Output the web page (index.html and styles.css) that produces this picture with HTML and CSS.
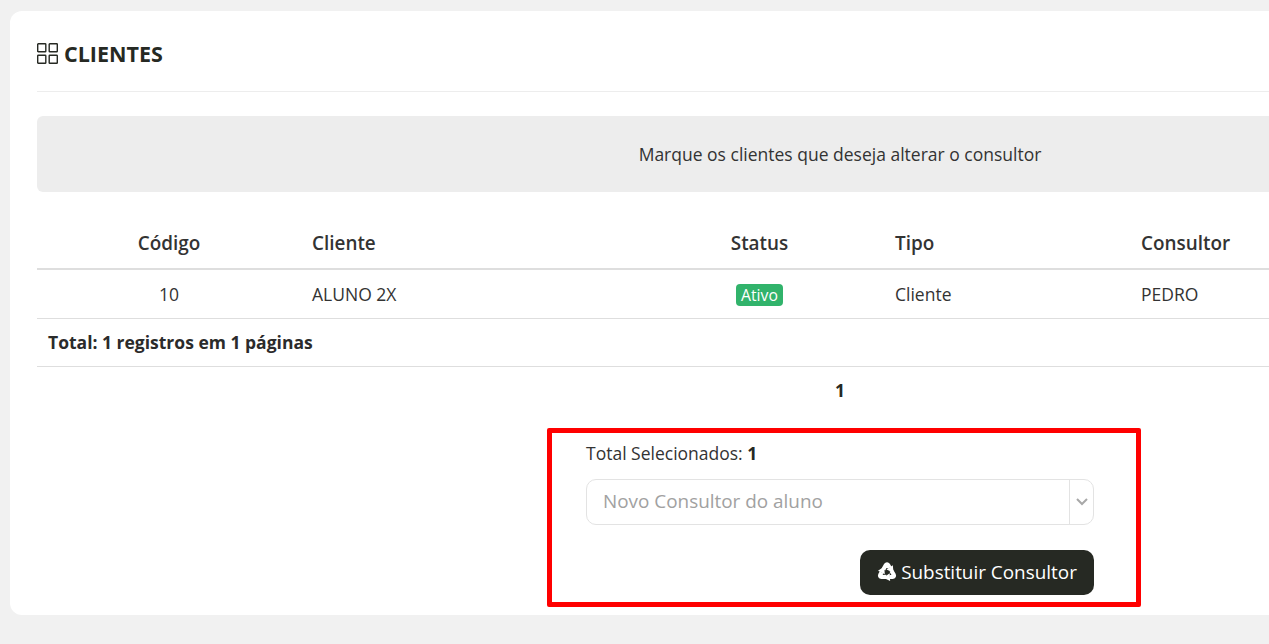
FILE: index.html
```html
<!DOCTYPE html>
<html lang="pt-BR">
<head>
<meta charset="utf-8">
<title>Clientes</title>
<link rel="stylesheet" href="styles.css">
</head>
<body>
<main class="card">
  <header class="card-head">
    <svg class="grid-icon" width="22" height="22" viewBox="0 0 22 22" fill="none" stroke="currentColor" stroke-width="1.4">
      <rect x="0.7" y="0.7" width="8.1" height="8.1" rx="0.6"/>
      <rect x="12.2" y="0.7" width="8.1" height="8.1" rx="0.6"/>
      <rect x="0.7" y="12.2" width="8.1" height="8.1" rx="0.6"/>
      <rect x="12.2" y="12.2" width="8.1" height="8.1" rx="0.6"/>
    </svg>
    <h1 class="title">CLIENTES</h1>
  </header>
  <div class="notice">Marque os clientes que deseja alterar o consultor</div>
  <table class="data">
    <colgroup>
      <col class="c-code"><col class="c-client"><col class="c-status"><col class="c-type"><col class="c-cons">
    </colgroup>
    <thead>
      <tr><th class="center">Código</th><th>Cliente</th><th class="center">Status</th><th>Tipo</th><th>Consultor</th></tr>
    </thead>
    <tbody>
      <tr><td class="center">10</td><td>ALUNO 2X</td><td class="center"><span class="badge">Ativo</span></td><td>Cliente</td><td>PEDRO</td></tr>
    </tbody>
  </table>
  <div class="total">Total: 1 registros em 1 páginas</div>
  <div class="pager">1</div>
  <section class="replace">
    <p class="selected">Total Selecionados: <b>1</b></p>
    <div class="select">
      <span class="placeholder">Novo Consultor do aluno</span>
      <span class="arrow">
        <svg width="12" height="8" viewBox="0 0 12 8" fill="none" stroke="#a8a8a8" stroke-width="2"><path d="M1 1l5 5 5-5"/></svg>
      </span>
    </div>
    <div class="actions">
      <button class="btn" type="button">
        <svg class="recycle" width="20" height="20" viewBox="0 0 24 24" fill="#fff">
          <g id="arm">
            <path d="M7.6 10.2L10.4 5.2Q12 3 13.6 5.2L15.2 8" fill="none" stroke="#fff" stroke-width="5"/>
            <path d="M11.4 10.2L19 5.2L19.8 14.2Z"/>
          </g>
          <use href="#arm" transform="rotate(120 12 13.6)"/>
          <use href="#arm" transform="rotate(240 12 13.6)"/>
        </svg>
        <span>Substituir Consultor</span>
      </button>
    </div>
    <div class="highlight"></div>
  </section>
</main>
</body>
</html>
```
FILE: styles.css
```css
* { box-sizing: border-box; }
html, body { margin: 0; height: 644px; overflow: hidden; }
body {
  background: #f1f1f1;
  padding: 11px 0 0 10px;
  font-family: "Open Sans", sans-serif;
  font-size: 17.5px;
  color: #333;
}
.card {
  width: 1660px;
  height: 604px;
  background: #fff;
  border-radius: 12px;
  padding: 0 27px;
}
.card-head {
  height: 81px;
  display: flex;
  align-items: center;
  gap: 5px;
  padding-top: 5px;
  border-bottom: 1px solid #ededed;
  color: #262923;
}
.grid-icon { flex: none; }
.title { margin: 0; font-size: 21.5px; font-weight: 700; color: #262923; }
.notice {
  margin-top: 24px;
  height: 76px;
  background: #ededed;
  border-radius: 6px;
  display: flex;
  align-items: center;
  justify-content: center;
}
.data {
  margin-top: 28px;
  width: 100%;
  table-layout: fixed;
  border-collapse: collapse;
}
.c-code { width: 264px; }
.c-client { width: 334px; }
.c-status { width: 249px; }
.c-type { width: 246px; }
.data th, .data td { padding: 0 11px; text-align: left; }
.data th {
  height: 49px;
  padding-bottom: 3px;
  font-size: 18.9px;
  font-weight: 600;
  border-bottom: 2px solid #dedede;
}
.data td { height: 49px; border-bottom: 1px solid #dedede; }
.data .center { text-align: center; }
.badge {
  display: inline-block;
  padding: 0 5.5px;
  background: #31b36b;
  color: #fff;
  font-size: 15.75px;
  line-height: 22px;
  border-radius: 4px;
  vertical-align: middle;
}
.total {
  height: 48px;
  padding: 0 11px;
  display: flex;
  align-items: center;
  font-weight: 700;
  color: #2b2b2b;
  border-bottom: 1px solid #dedede;
}
.pager {
  height: 48px;
  padding-bottom: 2px;
  display: flex;
  align-items: center;
  justify-content: center;
  font-weight: 700;
  color: #262923;
}
.replace {
  position: relative;
  width: 508px;
  margin: 14px auto 0;
  padding-top: 12px;
}
.selected { margin: 0; line-height: 24px; }
.selected b { color: #262923; }
.select {
  margin-top: 14px;
  height: 46px;
  display: flex;
  border: 1px solid #e3e3e3;
  border-radius: 10px;
  font-size: 18.9px;
}
.placeholder { flex: 1; padding-left: 16px; line-height: 42px; color: #a1a1a1; }
.arrow {
  width: 24px;
  border-left: 1px solid #e3e3e3;
  display: flex;
  align-items: center;
  justify-content: center;
}
.actions { margin-top: 25px; display: flex; justify-content: flex-end; }
.btn {
  height: 45px;
  width: 234px;
  padding: 0;
  border: 0;
  border-radius: 10px;
  background: #262923;
  color: #fff;
  font: 18.9px "Open Sans", sans-serif;
  display: flex;
  align-items: center;
  justify-content: center;
  gap: 4px;
}
.recycle { flex: none; margin-top: -2px; }
.highlight {
  position: absolute;
  left: -39px;
  top: -1px;
  width: 594px;
  height: 179px;
  border: 5px solid #f00;
  border-radius: 2px;
  pointer-events: none;
}
```
